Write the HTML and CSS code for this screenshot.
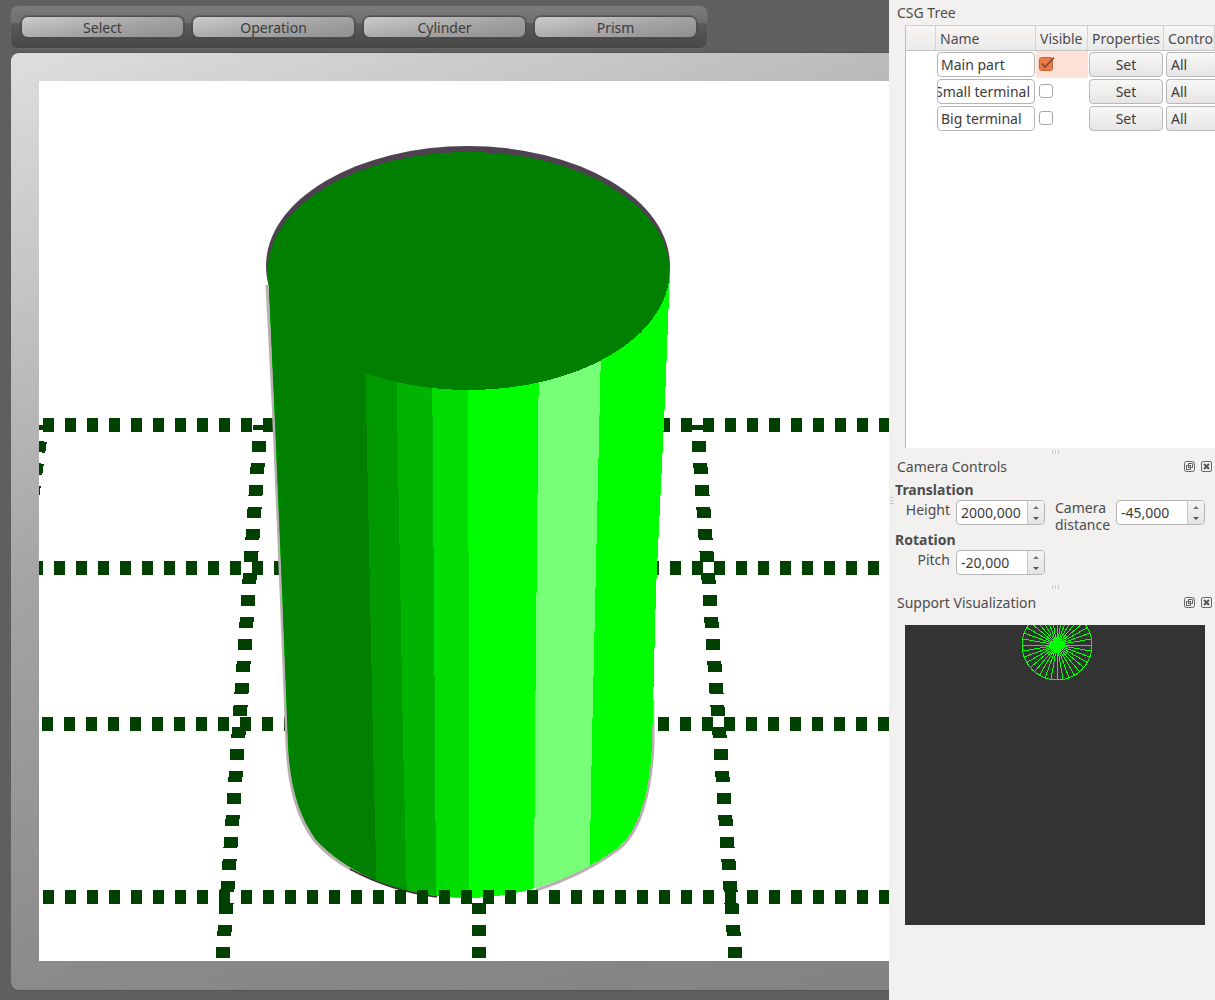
FILE: index.html
```html
<!DOCTYPE html>
<html>
<head>
<title>CSG Editor</title>
<link rel="stylesheet" href="styles.css">
</head>
<body>
<div class="app">

<div class="main-pane">
  <div class="toolbar">
    <button class="tool-btn">Select</button>
    <button class="tool-btn">Operation</button>
    <button class="tool-btn">Cylinder</button>
    <button class="tool-btn">Prism</button>
  </div>
  <div class="view-card">
    <svg class="scene" width="850" height="880" viewBox="39 81 850 880">
      <defs>
        <clipPath id="bodyClip">
          <path d="M268,271 L274,400 L282,590 L288,745 C290,785 298,815 316,840 C340,866 390,898 470,898 C530,898 590,870 620,846 C640,828 650,790 652,745 L656,590 L665,400 L670,271 Z"/>
        </clipPath>
      </defs>

      <!-- floor grid, behind the cylinder -->
      <line class="grid-line" x1="43" y1="425" x2="889" y2="425"/>
      <line class="grid-line" x1="32" y1="568" x2="889" y2="568"/>
      <line class="grid-line" x1="42" y1="724" x2="889" y2="724"/>
      <line class="grid-line grid-line-v" x1="42" y1="425" x2="2" y2="720" pathLength="295"/>
      <line class="grid-line grid-line-v" x1="260.5" y1="425" x2="222.5" y2="960" pathLength="535"/>
      <line class="grid-line grid-line-v" x1="479" y1="425" x2="479" y2="960" pathLength="535"/>
      <line class="grid-line grid-line-v" x1="697.5" y1="425" x2="735.5" y2="960" pathLength="535"/>

      <!-- cylinder -->
      <path class="rim-grey" d="M267,285 L273,400 L281,590 L287,745 C289,787 297,817 315,841 C330,858 345,866 352,870"/>
      <path class="rim-grey" d="M653,700 L653,745 C651,790 641,829 621,847 C600,863 570,879 536,890"/>
      <path class="body" d="M268,271 L274,400 L282,590 L288,745 C290,785 298,815 316,840 C340,866 390,898 470,898 C530,898 590,870 620,846 C640,828 650,790 652,745 L656,590 L665,400 L670,271 Z"/>
      <g clip-path="url(#bodyClip)">
        <polygon class="facet-1" points="260,260 365,350 373,740 377,900 260,900"/>
        <polygon class="facet-2" points="365,350 396,350 403,740 407,900 377,900 373,740"/>
        <polygon class="facet-3" points="396,350 432,350 435,740 436,900 407,900 403,740"/>
        <polygon class="facet-4" points="432,350 468,350 469,740 469,900 436,900 435,740"/>
        <polygon class="facet-6" points="539,350 601,350 592,740 589,900 534,900 535,740"/>
      </g>
      <path class="rim-dark" d="M350,869 C370,880 400,892 437,897"/>
      <ellipse class="top-rim" cx="468" cy="266" rx="202" ry="120"/>
      <ellipse class="top-face" cx="468.5" cy="271" rx="201" ry="119"/>

      <!-- nearest grid row passes over the foot of the cylinder -->
      <line class="grid-line" x1="43" y1="896.5" x2="889" y2="896.5"/>
    </svg>
  </div>
</div>

<div class="dock-pane">
  <div class="dock-title">CSG Tree</div>
  <div class="tree">
    <div class="tree-row tree-head">
      <div class="head-cell"></div>
      <div class="head-cell">Name</div>
      <div class="head-cell">Visible</div>
      <div class="head-cell">Properties</div>
      <div class="head-cell">Control</div>
    </div>
    <div class="tree-row">
      <div></div>
      <div class="name-box">Main part</div>
      <div class="check-cell check-cell-on">
        <span class="check check-on">
          <svg width="14" height="14" viewBox="0 0 14 14"><path class="check-mark" d="M3 6.5 L6 10 L15 0.5"/></svg>
        </span>
      </div>
      <button class="set-btn">Set</button>
      <div class="combo">All</div>
    </div>
    <div class="tree-row">
      <div></div>
      <div class="name-box name-box-tight">Small terminal</div>
      <div class="check-cell"><span class="check"></span></div>
      <button class="set-btn">Set</button>
      <div class="combo">All</div>
    </div>
    <div class="tree-row">
      <div></div>
      <div class="name-box">Big terminal</div>
      <div class="check-cell"><span class="check"></span></div>
      <button class="set-btn">Set</button>
      <div class="combo">All</div>
    </div>
  </div>

  <div class="split-h"><i></i><i></i><i></i></div>

  <div class="dock-title dock-title-camera">
    <span>Camera Controls</span>
    <span class="dock-icons">
      <svg width="11" height="11" viewBox="0 0 11 11"><rect class="dock-icon" x="0.5" y="0.5" width="10" height="10" rx="2"/><rect class="dock-icon" x="4.5" y="2.5" width="4" height="4"/><rect class="dock-icon" x="2.5" y="4.5" width="4" height="4"/></svg>
      <svg width="11" height="11" viewBox="0 0 11 11"><rect class="dock-icon" x="0.5" y="0.5" width="10" height="10" rx="1.5"/><path class="dock-x" d="M3 3 L8 8 M8 3 L3 8"/></svg>
    </span>
  </div>
  <div class="camera">
    <div class="group-label">Translation</div>
    <div class="camera-row">
      <div class="field-label field-height">Height</div>
      <div class="spin"><span class="spin-value">2000,000</span><span class="spin-arrows"><i class="arrow-up"></i><i class="arrow-down"></i></span></div>
      <div class="field-label field-distance">Camera<br>distance</div>
      <div class="spin"><span class="spin-value">-45,000</span><span class="spin-arrows"><i class="arrow-up"></i><i class="arrow-down"></i></span></div>
    </div>
    <div class="group-label group-rotation">Rotation</div>
    <div class="camera-row">
      <div class="field-label field-height">Pitch</div>
      <div class="spin"><span class="spin-value">-20,000</span><span class="spin-arrows"><i class="arrow-up"></i><i class="arrow-down"></i></span></div>
    </div>
  </div>

  <div class="split-h"><i></i><i></i><i></i></div>

  <div class="dock-title">
    <span>Support Visualization</span>
    <span class="dock-icons">
      <svg width="11" height="11" viewBox="0 0 11 11"><rect class="dock-icon" x="0.5" y="0.5" width="10" height="10" rx="2"/><rect class="dock-icon" x="4.5" y="2.5" width="4" height="4"/><rect class="dock-icon" x="2.5" y="4.5" width="4" height="4"/></svg>
      <svg width="11" height="11" viewBox="0 0 11 11"><rect class="dock-icon" x="0.5" y="0.5" width="10" height="10" rx="1.5"/><path class="dock-x" d="M3 3 L8 8 M8 3 L3 8"/></svg>
    </span>
  </div>
  <svg class="support" width="300" height="300" viewBox="905 625 300 300">
    <g class="support-lines" transform="translate(1057 645)">
      <circle r="35"/>
      <line x1="-35" x2="35"/>
      <line x1="-35" x2="35" transform="rotate(10)"/>
      <line x1="-35" x2="35" transform="rotate(20)"/>
      <line x1="-35" x2="35" transform="rotate(30)"/>
      <line x1="-35" x2="35" transform="rotate(40)"/>
      <line x1="-35" x2="35" transform="rotate(50)"/>
      <line x1="-35" x2="35" transform="rotate(60)"/>
      <line x1="-35" x2="35" transform="rotate(70)"/>
      <line x1="-35" x2="35" transform="rotate(80)"/>
      <line x1="-35" x2="35" transform="rotate(90)"/>
      <line x1="-35" x2="35" transform="rotate(100)"/>
      <line x1="-35" x2="35" transform="rotate(110)"/>
      <line x1="-35" x2="35" transform="rotate(120)"/>
      <line x1="-35" x2="35" transform="rotate(130)"/>
      <line x1="-35" x2="35" transform="rotate(140)"/>
      <line x1="-35" x2="35" transform="rotate(150)"/>
      <line x1="-35" x2="35" transform="rotate(160)"/>
      <line x1="-35" x2="35" transform="rotate(170)"/>
      <polygon class="support-hub" points="0,-8 8,0 0,8 -8,0"/>
    </g>
  </svg>

  <div class="split-v"><i></i><i></i><i></i></div>
</div>

</div>
</body>
</html>
```

FILE: styles.css
```css
body {
  margin: 0;
  font-family: "Noto Sans", sans-serif;
  font-size: 14px;
  color: #3c3c3c;
}

.app {
  display: flex;
  width: 1215px;
  height: 1000px;
  overflow: hidden;
}

/* left side: toolbar and 3d view */
.main-pane {
  width: 889px;
  flex: none;
  overflow: hidden;
  background: #5f5f5f;
  padding: 5px 0 0 10px;
  box-sizing: border-box;
}

.toolbar {
  width: 698px;
  height: 44px;
  box-sizing: border-box;
  display: flex;
  gap: 8px;
  padding: 10px 10px 0 10px;
  border-radius: 8px;
  border: 1px solid #656565;
  background: linear-gradient(to bottom, #7c7c7c 0%, #6e6e6e 40%, #5a5a5a 42%, #474747 100%);
}

.tool-btn {
  width: 163px;
  height: 22px;
  padding: 1px 0 0 0;
  font: inherit;
  color: #3c3c3c;
  border: 1px solid #4f4f4f;
  border-radius: 7px;
  background: linear-gradient(170deg, #cccccc 0%, #a4a4a4 55%, #8f8f8f 100%);
  box-shadow: 0 0 0 1px rgba(60, 60, 60, 0.35);
}

.view-card {
  width: 920px;
  height: 937px;
  margin: 4px 0 0 1px;
  padding: 28px;
  box-sizing: border-box;
  border-radius: 8px 0 0 8px;
  background: linear-gradient(160deg, #dedede 0%, #bcbcbc 25%, #a4a4a4 42%, #8a8a8a 74%, #828282 100%);
  box-shadow: 0 -1px 0 #555555, 0 1px 0 #555555;
}

.scene {
  display: block;
  background: #ffffff;
}

.grid-line {
  stroke: #004000;
  stroke-width: 14;
  stroke-dasharray: 11 11;
  shape-rendering: crispEdges;
}

.grid-line-v {
  stroke-dashoffset: 6;
}

.body { fill: #00ff00; shape-rendering: crispEdges; }
.facet-1 { fill: #007f00; shape-rendering: crispEdges; }
.facet-2 { fill: #009900; shape-rendering: crispEdges; }
.facet-3 { fill: #00b300; shape-rendering: crispEdges; }
.facet-4 { fill: #00dd00; shape-rendering: crispEdges; }
.facet-6 { fill: #77ff77; shape-rendering: crispEdges; }
.top-face { fill: #007f00; shape-rendering: crispEdges; }
.top-rim { fill: #4f4250; }

.rim-grey {
  fill: none;
  stroke: #b8b0b0;
  stroke-width: 3;
}

.rim-dark {
  fill: none;
  stroke: #3a2833;
  stroke-width: 1.5;
}

/* right side: docks */
.dock-pane {
  position: relative;
  width: 326px;
  flex: none;
  background: #f2f1f0;
  display: flex;
  flex-direction: column;
}

.dock-title {
  height: 25px;
  line-height: 25px;
  flex: none;
  padding: 0 3px 0 8px;
  box-sizing: border-box;
  display: flex;
  justify-content: space-between;
  align-items: center;
  color: #4c4c4c;
}

.dock-title-camera {
  padding-bottom: 2px;
}

.dock-icons {
  display: flex;
  gap: 6px;
}

.dock-icons svg { display: block; }

.dock-icon {
  fill: none;
  stroke: #666666;
  stroke-width: 1;
}

.dock-x {
  fill: none;
  stroke: #555555;
  stroke-width: 2;
}

.tree {
  height: 423px;
  flex: none;
  margin-left: 16px;
  background: #ffffff;
  border-left: 1px solid #bdbdbd;
  border-top: 1px solid #d0d0d0;
  box-sizing: border-box;
  overflow: hidden;
}

.tree-row {
  display: grid;
  grid-template-columns: 30px 100px 52px 76px 1fr;
  height: 27px;
  align-items: center;
}

.tree-head {
  height: 25px;
  box-sizing: border-box;
  border-bottom: 1px solid #c4c4c4;
  background: linear-gradient(to bottom, #f6f5f4, #ebeaea);
  align-items: stretch;
}

.head-cell {
  padding-left: 4px;
  line-height: 25px;
  border-right: 1px solid #d4d4d4;
  white-space: nowrap;
  overflow: hidden;
  color: #4c4c4c;
}

.name-box {
  width: 98px;
  height: 25px;
  margin-left: 1px;
  line-height: 23px;
  box-sizing: border-box;
  padding-left: 3px;
  border: 1px solid #b5b5b5;
  border-radius: 4px;
  background: #ffffff;
  white-space: nowrap;
  overflow: hidden;
}

.name-box-tight {
  display: flex;
  justify-content: flex-end;
  padding-right: 4px;
}

.check-cell {
  height: 27px;
  box-sizing: border-box;
  display: flex;
  align-items: center;
  padding: 0 0 1px 3px;
}

.check-cell-on { background: #fde0d6; }

.check {
  width: 14px;
  height: 14px;
  box-sizing: border-box;
  border: 1px solid #a8a8a8;
  border-radius: 3px;
  background: #ffffff;
  display: block;
}

.check-on {
  background: #ea7a48;
  border-color: #c9602f;
}

.check-on svg {
  display: block;
  margin: -1px;
  overflow: visible;
}

.check-mark {
  fill: none;
  stroke: #7a4a38;
  stroke-width: 1.6;
}

.set-btn {
  width: 74px;
  height: 25px;
  margin-left: 1px;
  padding: 0;
  font: inherit;
  color: #3c3c3c;
  border: 1px solid #b8b8b8;
  border-radius: 4px;
  background: linear-gradient(to bottom, #f8f8f7, #e6e5e4);
}

.combo {
  height: 25px;
  line-height: 23px;
  box-sizing: border-box;
  padding-left: 4px;
  margin-left: 2px;
  border: 1px solid #b8b8b8;
  border-right: 0;
  border-radius: 4px 0 0 4px;
  background: linear-gradient(to bottom, #f8f8f7, #e6e5e4);
}

.split-h {
  height: 7px;
  flex: none;
  display: flex;
  justify-content: center;
  align-items: center;
  gap: 2px;
  padding-left: 6px;
}

.split-h i {
  width: 1px;
  height: 4px;
  background: #c8c8c8;
}

.split-v {
  position: absolute;
  left: 1px;
  top: 497px;
  display: flex;
  flex-direction: column;
  gap: 2px;
}

.split-v i {
  width: 4px;
  height: 1px;
  background: #c8c8c8;
}

.camera {
  flex: none;
  height: 103px;
  padding: 1px 0 0 6px;
  box-sizing: border-box;
}

.group-label {
  font-weight: 700;
  line-height: 18px;
  height: 18px;
  color: #4c4c4c;
}

.group-rotation {
  margin-top: -2px;
}

.camera-row {
  display: flex;
  align-items: flex-start;
  margin-top: 1px;
}

.field-label {
  line-height: 17px;
  color: #4c4c4c;
}

.field-height {
  width: 61px;
  padding-right: 6px;
  box-sizing: border-box;
  text-align: right;
  margin-top: 1px;
}

.field-distance {
  width: 61px;
  margin: -1px 0 0 10px;
}

.spin {
  width: 89px;
  height: 25px;
  box-sizing: border-box;
  display: flex;
  border: 1px solid #b5b5b5;
  border-radius: 4px;
  background: #ffffff;
  overflow: hidden;
}

.spin-value {
  flex: 1;
  padding-left: 4px;
  line-height: 23px;
  white-space: nowrap;
}

.spin-arrows {
  width: 16px;
  flex: none;
  border-left: 1px solid #c8c8c8;
  background: linear-gradient(to bottom, #f6f5f4, #e4e3e2);
  display: flex;
  flex-direction: column;
  align-items: center;
  justify-content: center;
  gap: 8px;
}

.arrow-up {
  border: 3px solid transparent;
  border-top: 0;
  border-bottom: 3px solid #777777;
}

.arrow-down {
  border: 3px solid transparent;
  border-bottom: 0;
  border-top: 3px solid #555555;
}

.support {
  display: block;
  flex: none;
  margin: 10px 0 0 16px;
  background: #333333;
}

.support-lines {
  fill: none;
  stroke: #00ff00;
  stroke-width: 1;
  shape-rendering: crispEdges;
}

.support-hub {
  fill: #00ff00;
}
```
